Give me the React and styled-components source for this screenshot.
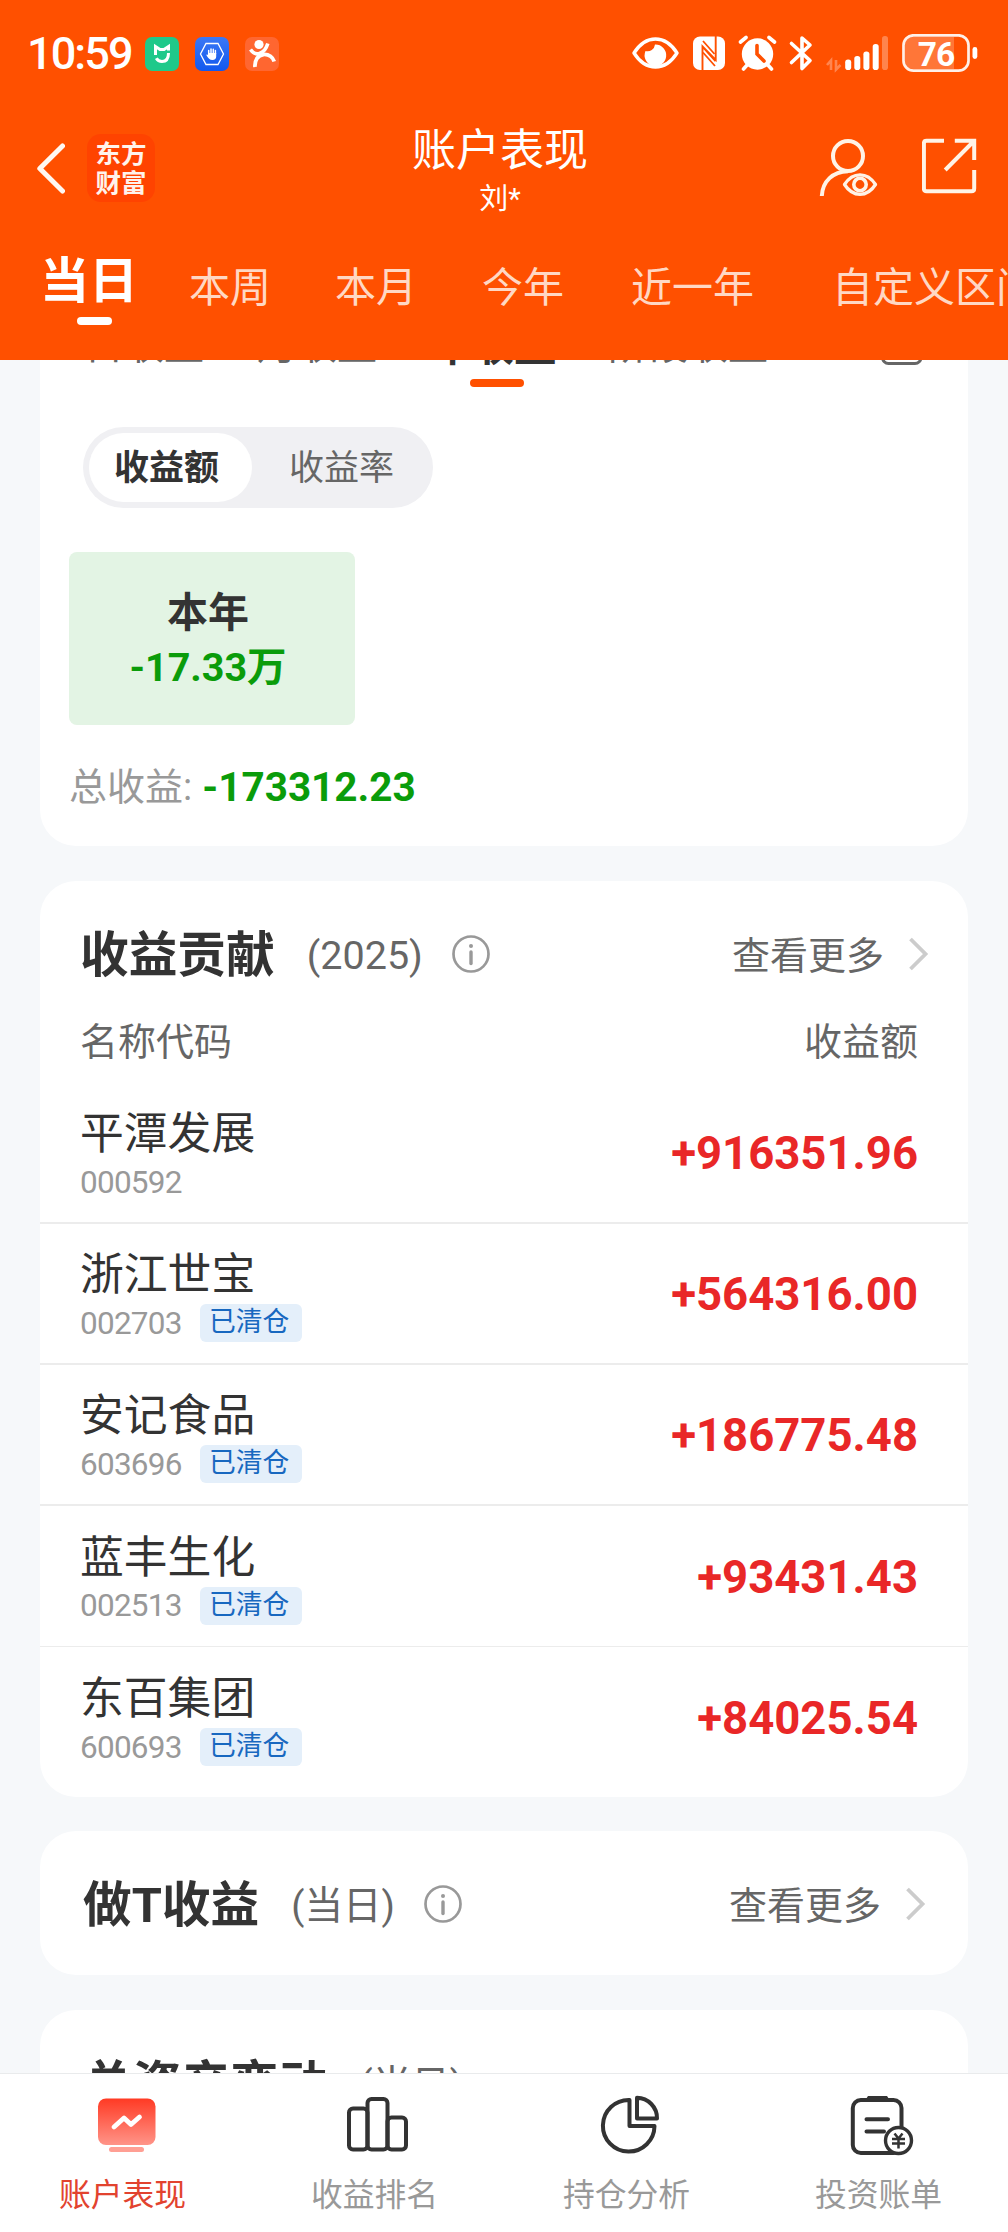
import React from 'react';
import styled, { createGlobalStyle } from 'styled-components';

const GlobalStyle = createGlobalStyle`
  * { box-sizing: border-box; }
  html, body { margin: 0; padding: 0; }
  body {
    background: #f6f8fa;
    font-family: Roboto, "Noto Sans CJK SC", sans-serif;
    color: #333;
  }
  svg { display: block; flex: none; }
`;

const Screen = styled.div`
  width: 1008px;
  height: 2232px;
  display: flex;
  flex-direction: column;
  overflow: hidden;
  background: #f6f8fa;
`;

const Header = styled.header`
  flex: none;
  height: 360px;
  background: #ff5000;
  color: #fff;
  display: flex;
  flex-direction: column;
`;

const StatusBar = styled.div`
  height: 108px;
  padding: 0 30px 0 27px;
  display: flex;
  align-items: center;
  justify-content: space-between;
`;

const StatusLeft = styled.div`
  display: flex;
  align-items: center;
`;

const Clock = styled.span`
  width: 117px;
  font-size: 45px;
  font-weight: 500;
  letter-spacing: -1.9px;
  line-height: 50px;
  white-space: nowrap;
`;

const TitleBar = styled.div`
  height: 120px;
  display: grid;
  grid-template-columns: 400px 200px 1fr;
  align-items: center;
`;

const TitleLeft = styled.div`
  display: flex;
  align-items: center;
  gap: 22px;
  padding-left: 36px;
`;

const Logo = styled.div`
  width: 68px;
  height: 68px;
  border-radius: 14px;
  background: #ff4300;
  color: #fff3ec;
  display: flex;
  align-items: center;
  justify-content: center;
  text-align: center;
  font-size: 25.5px;
  font-weight: 700;
  line-height: 29px;
  padding-top: 2px;
`;

const TitleCenter = styled.div`
  display: flex;
  flex-direction: column;
  align-items: center;
  padding-top: 6px;
`;

const Title = styled.div`
  font-size: 44px;
  line-height: 56px;
  white-space: nowrap;
`;

const Account = styled.div`
  font-size: 29px;
  line-height: 40px;
`;

const TitleRight = styled.div`
  display: flex;
  justify-content: flex-end;
  gap: 43px;
  padding-right: 30px;
`;

const RangeTabs = styled.nav`
  height: 132px;
  padding-left: 40px;
  display: grid;
  grid-template-columns: 149px 146px 147px 149px 201px 230px;
  overflow: hidden;
`;

const RangeTab = styled.div`
  display: flex;
  flex-direction: column;
  padding-top: ${(p) => (p.$active ? '27px' : '33px')};
  font-size: ${(p) => (p.$active ? '49px' : '41px')};
  font-weight: ${(p) => (p.$active ? 700 : 400)};
  color: ${(p) => (p.$active ? '#fff' : '#ffd8c4')};
  line-height: 54px;
  white-space: nowrap;
`;

const RangeMark = styled.span`
  width: 35px;
  height: 8px;
  margin: 8px 0 0 37px;
  border-radius: 4px;
  background: #fff;
`;

const Content = styled.main`
  flex: none;
  height: 1713px;
  overflow: hidden;
  padding: 0 40px;
  display: flex;
  flex-direction: column;
`;

const Card = styled.section`
  flex: none;
  background: #fff;
  border-radius: 36px;
  margin-bottom: ${(p) => p.$gap || 35}px;
  height: ${(p) => p.$height}px;
`;

const CalendarCard = styled(Card)`
  margin-top: -54px;
  padding: 0 29px;
  display: flex;
  flex-direction: column;
  align-items: flex-start;
`;

const PeriodTabs = styled.div`
  height: 81px;
  width: 100%;
  padding-left: 15px;
  display: grid;
  grid-template-columns: 173px 172px 179px 273px auto;
`;

const PeriodTab = styled.div`
  display: flex;
  flex-direction: column;
  padding-top: ${(p) => (p.$active ? '13px' : '12px')};
  font-size: ${(p) => (p.$active ? '42.5px' : '40px')};
  font-weight: ${(p) => (p.$active ? 700 : 400)};
  color: ${(p) => (p.$active ? '#333' : '#666')};
  line-height: 56px;
  white-space: nowrap;
`;

const PeriodMark = styled.span`
  width: 54px;
  height: 8px;
  margin: 4px 0 0 41px;
  border-radius: 4px;
  background: #ff5000;
`;

const Segment = styled.div`
  margin: 40px 0 0 14px;
  width: 350px;
  height: 81px;
  padding: 6px;
  border-radius: 41px;
  background: #f0f0f3;
  display: flex;
`;

const SegmentItem = styled.div`
  width: ${(p) => (p.$active ? '163px' : '175px')};
  height: 69px;
  padding: ${(p) => (p.$active ? '0 8px 0 0' : '0 0 0 4px')};
  border-radius: 35px;
  background: ${(p) => (p.$active ? '#fff' : 'transparent')};
  color: ${(p) => (p.$active ? '#333' : '#666')};
  font-weight: ${(p) => (p.$active ? 700 : 400)};
  font-size: 35px;
  line-height: 72px;
  text-align: center;
`;

const YearTile = styled.div`
  margin-top: 44px;
  width: 286px;
  height: 173px;
  padding: 34px 8px 0 0;
  border-radius: 8px;
  background: #e3f4e4;
  text-align: center;
  font-weight: 700;
`;

const YearName = styled.div`
  font-size: 41px;
  line-height: 55px;
`;

const YearValue = styled.div`
  font-size: 39.5px;
  line-height: 54px;
  color: #0a9c0a;
`;

const Total = styled.div`
  margin-top: 34px;
  display: flex;
  align-items: center;
  gap: 10px;
  font-size: 38px;
  line-height: 56px;
  color: #999;
`;

const TotalValue = styled.b`
  font-size: 40.5px;
  color: #0a9c0a;
`;

const CardHead = styled.div`
  padding: 49px ${(p) => p.$right || 40}px 0 ${(p) => p.$left}px;
  display: flex;
  align-items: center;
`;

const CardTitle = styled.h2`
  margin: 0;
  padding-top: 3px;
  height: 48px;
  font-size: 48.7px;
  font-weight: 700;
  line-height: 46px;
  white-space: nowrap;
`;

const CardScope = styled.span`
  margin: 0 28px 0 32px;
  padding-top: 3px;
  font-size: ${(p) => (p.$numeric ? 39.5 : 38.5)}px;
  line-height: 44px;
  color: #666;
  white-space: nowrap;
`;

const More = styled.div`
  margin-left: auto;
  display: flex;
  align-items: center;
  gap: 25px;
  color: #666;
  font-size: 38px;
  line-height: 44px;
`;

const MoreText = styled.span`
  padding-top: 3px;
`;

const ColumnNames = styled.div`
  margin: 43px 0 20px;
  padding: 0 50px 0 40px;
  display: flex;
  justify-content: space-between;
  font-size: 38px;
  line-height: 42px;
  color: #666;
`;

const StockRow = styled.div`
  height: 141px;
  padding: 0 50px 0 40px;
  display: flex;
  align-items: center;
  justify-content: space-between;
  border-bottom: ${(p) => p.$line}px solid #ececec;
`;

const StockInfo = styled.div`
  padding-top: 9px;
`;

const StockName = styled.div`
  font-size: 43.8px;
  line-height: 50px;
`;

const StockMeta = styled.div`
  height: 46px;
  display: flex;
  align-items: center;
  gap: 18px;
`;

const StockCode = styled.span`
  font-size: 31.5px;
  letter-spacing: -0.75px;
  line-height: 46px;
  padding-top: 1px;
  color: #999;
`;

const ClosedTag = styled.span`
  width: 102px;
  height: 38px;
  padding-right: 3px;
  border-radius: 6px;
  background: #e4effa;
  color: #1868c0;
  font-size: 26.8px;
  line-height: 36px;
  text-align: center;
`;

const Gain = styled.span`
  padding-top: 3px;
  font-size: 45.5px;
  font-weight: 700;
  line-height: 60px;
  color: #e92727;
`;

const BottomNav = styled.nav`
  flex: none;
  height: 159px;
  border-top: 1px solid #e9ebec;
  background: #fff;
  display: grid;
  grid-template-columns: repeat(4, 1fr);
`;

const NavItem = styled.div`
  display: flex;
  flex-direction: column;
  align-items: center;
  padding-top: 17px;
  color: ${(p) => (p.$active ? '#e2432f' : '#999')};
`;

const NavLabel = styled.span`
  margin: 16px 7px 0 0;
  font-size: 31.8px;
  line-height: 44px;
`;

const AppBadges = () => (
  <svg width="136" height="36" viewBox="144 36 136 36">
    <defs>
      <linearGradient id="blueBadge" x1="0" y1="0" x2="0" y2="1">
        <stop offset="0" stopColor="#3b78f5" />
        <stop offset="1" stopColor="#1158ee" />
      </linearGradient>
    </defs>
    <rect x="145" y="37" width="34" height="34" rx="7" fill="#1fc98a" />
    <path d="M155.5 55V46.5L160 49.5H164L168.500 46.500V50.500" fill="none" stroke="#fff" strokeWidth="3" />
    <path d="M168.500 53c0 5.500-2.500 8.500-6.500 8.500c-2.500 0-4.500-1-5.700-3.200" fill="none" stroke="#fff" strokeWidth="3" />
    <rect x="195" y="37" width="34" height="34" rx="7" fill="url(#blueBadge)" />
    <path d="M206 43.500H218L223.500 54L218 64.500H206L200.500 54Z" fill="none" stroke="#fff" strokeWidth="1.300" />
    <path d="M208.700 53.500V50.500M211 53.500V49M213.300 53.500V49.200M215.400 54V50.500" stroke="#fff" strokeWidth="1.500" strokeLinecap="round" />
    <path d="M208 53h8.200v3.500c0 2-1.300 3.500-3.700 3.500c-2.800 0-4.200-1.600-6.200-5c.8-.8 1.500-.3 1.700.2z" fill="#fff" />
    <rect x="245" y="37" width="34" height="34" rx="7" fill="#ff6630" />
    <circle cx="259" cy="44.500" r="4.600" fill="#fff" />
    <path d="M250.500 49.500C253 53 256.500 54.500 259.500 53.500C264 52 266.500 48 267.800 43.500" fill="none" stroke="#fff" strokeWidth="3.600" />
    <path d="M255 67C254.500 60 258 55 263.500 54.500C269 54 273 57.500 274.200 61.500" fill="none" stroke="#fff" strokeWidth="3.800" />
  </svg>
);

const StatusIcons = () => (
  <svg width="346" height="40" viewBox="632 34 346 40" fill="none">
    <path d="M634 53C640 43.500 647 39 655.500 39S671 43.500 677 53C671 62.500 664 67 655.500 67S640 62.500 634 53Z" stroke="#fff" strokeWidth="3.400" strokeLinejoin="round" />
    <path d="M655 44.500A10.800 10.800 0 1 1 645.500 51A7.500 7.500 0 0 0 655 44.500Z" fill="#fff" />
    <rect x="693" y="36.500" width="32" height="33.500" rx="7" fill="#fff" />
    <path d="M702.500 70V46.500L715.500 61M715.700 36V60L702.500 46.500" stroke="#ff5000" strokeWidth="1.900" />
    <path d="M703 52.500L715 66M703 41L714.500 54" stroke="#ff5000" strokeWidth="1.800" />
    <circle cx="757.500" cy="54" r="15.700" fill="#fff" />
    <path d="M740.500 42L746 37.500M769 37.500L774.500 42M748 64L743.500 69M767 64L771.500 69" stroke="#fff" strokeWidth="3.600" strokeLinecap="round" />
    <path d="M757 45.500V54L764 61" stroke="#ff5000" strokeWidth="3.600" strokeLinecap="round" />
    <path d="M791.500 43.500L810 60.500L802 68.500V38L810 45L791.500 62.500" stroke="#fff" strokeWidth="3.600" strokeLinejoin="round" strokeLinecap="round" />
    <path d="M827 65L831 60.500V70M836 60V69.500L840.500 65" stroke="#ff8550" strokeWidth="2.600" />
    <g fill="#fff">
      <rect x="845.200" y="59.500" width="6" height="10.500" rx="2.800" />
      <rect x="854.300" y="56" width="6" height="14" rx="2.800" />
      <rect x="863.400" y="51.500" width="6" height="18.500" rx="2.800" />
      <rect x="872.700" y="44" width="6" height="26" rx="2.800" />
      <rect x="882" y="36" width="6" height="34" rx="2.800" fillOpacity=".3" />
    </g>
    <path d="M913 37H954V69H913Q905 69 905 61V45Q905 37 913 37Z" fill="#ff7638" />
    <rect x="903.500" y="35.300" width="65" height="35.400" rx="10" stroke="#fff0e8" strokeWidth="2.700" />
    <rect x="972.500" y="47" width="4.800" height="12" rx="2.400" fill="#fff" />
    <text x="936" y="65.500" textAnchor="middle" fill="#fff" fontFamily="Roboto, sans-serif" fontSize="33.500" fontWeight="700" letterSpacing="-1">76</text>
  </svg>
);

const BackIcon = () => (
  <svg width="29" height="54" viewBox="36 141 29 54" fill="none">
    <path d="M62.500 146L39.800 168.500L62.500 191" stroke="#fff8f2" strokeWidth="5" strokeLinecap="round" strokeLinejoin="round" />
  </svg>
);

const PersonIcon = () => (
  <svg width="60" height="62" viewBox="819 137 60 62" fill="none" stroke="#fff3e6" strokeWidth="4">
    <circle cx="848" cy="156" r="15" />
    <path d="M821.800 196C822.500 181 833 171.500 848 171.200" />
    <path d="M844.500 184.500C849 177.500 854 174.800 860 174.800S871 177.500 875.500 184.500C871 191.500 866 194.300 860 194.300S849 191.500 844.500 184.500Z" strokeWidth="3.300" strokeLinejoin="round" />
    <circle cx="860" cy="184.500" r="6.200" strokeWidth="3.600" />
  </svg>
);

const ExportIcon = () => (
  <svg width="56" height="58" viewBox="922 139 56 58" fill="none" stroke="#fff3e6" strokeWidth="4">
    <path d="M944 142.800H926.500Q923.900 142.800 923.900 145.400V190.500Q923.900 193.200 926.500 193.200H971.500Q974.200 193.200 974.200 190.500V172" />
    <path d="M954.800 142.800H974.200V162M974 143L945.200 172" />
  </svg>
);

const CalendarIcon = () => (
  <svg width="42" height="46" viewBox="0 0 42 46" fill="none" stroke="#666" strokeWidth="3">
    <rect x="1.500" y="4.500" width="38.500" height="40" rx="6" />
    <path d="M2 16H40M12 0V9M30 0V9" />
  </svg>
);

const CalendarSlot = styled.div`
  padding-top: 13px;
`;

const InfoIcon = () => (
  <svg width="40" height="40" viewBox="0 0 40 40" fill="none" stroke="#999">
    <circle cx="20" cy="20" r="17.500" strokeWidth="2.700" />
    <path d="M20 18V29.500" strokeWidth="3.400" strokeLinecap="round" />
    <circle cx="20" cy="12" r="2" fill="#999" stroke="none" />
  </svg>
);

const ChevronIcon = () => (
  <svg width="22" height="36" viewBox="0 0 22 36" fill="none">
    <path d="M1.500 3L16.500 18L1.500 33" stroke="#ccc" strokeWidth="3.800" />
  </svg>
);

const PerformanceIcon = () => (
  <svg width="64" height="66" viewBox="94 2091 64 66" fill="none">
    <defs>
      <linearGradient id="screenFill" x1="0" y1="0" x2="0" y2="1">
        <stop offset="0" stopColor="#ff3a24" />
        <stop offset="1" stopColor="#ff9488" />
      </linearGradient>
    </defs>
    <rect x="98" y="2098.500" width="57.500" height="46.500" rx="8" fill="url(#screenFill)" />
    <path d="M114 2127L124 2118L131 2124.500L139.500 2117" stroke="#fff" strokeWidth="4.800" strokeLinecap="round" strokeLinejoin="round" />
    <rect x="109" y="2147" width="35" height="5" rx="2.500" fill="#ff9f94" />
  </svg>
);

const RankingIcon = () => (
  <svg width="66" height="66" viewBox="346 2091 66 66" fill="none" stroke="#333" strokeWidth="4">
    <rect x="350" y="2108.500" width="18.500" height="41" rx="4" />
    <rect x="368.500" y="2099" width="20" height="50.500" rx="4" />
    <rect x="388.500" y="2117.500" width="18.500" height="32" rx="4" />
  </svg>
);

const PieIcon = () => (
  <svg width="62" height="66" viewBox="599 2091 62 66" fill="none" stroke="#333" strokeWidth="4" strokeLinejoin="round">
    <path d="M629.500 2100A25.800 25.800 0 1 0 654.500 2126H629.500Z" />
    <path d="M637 2097.800V2118.500H657A20.300 20.300 0 0 0 637 2097.800Z" />
  </svg>
);

const BillIcon = () => (
  <svg width="66" height="66" viewBox="850 2091 66 66" fill="none" stroke="#333" strokeWidth="4">
    <path d="M867 2099L869 2096H888L890 2099V2101H867Z" fill="#333" stroke="none" />
    <rect x="853.800" y="2100" width="48.700" height="53" rx="8" />
    <path d="M867.500 2119.300H889M867.500 2131.500H885" strokeLinecap="round" />
    <circle cx="899.500" cy="2140.500" r="13" fill="#fff" strokeWidth="3.400" />
    <path d="M895.500 2133.500L899.500 2138.500L903.500 2133.500M899.500 2138.500V2148.500M893 2139H906M893 2143.500H906" strokeWidth="2.500" />
  </svg>
);

const ranges = ['当日', '本周', '本月', '今年', '近一年', '自定义区间'];
const periods = ['日收益', '月收益', '年收益', '阶段收益'];
const stocks = [
  { name: '平潭发展', code: '000592', gain: '+916351.96', closed: false, line: 2 },
  { name: '浙江世宝', code: '002703', gain: '+564316.00', closed: true, line: 2 },
  { name: '安记食品', code: '603696', gain: '+186775.48', closed: true, line: 2 },
  { name: '蓝丰生化', code: '002513', gain: '+93431.43', closed: true, line: 1 },
  { name: '东百集团', code: '600693', gain: '+84025.54', closed: true, line: 0 },
];
const navItems = [
  { label: '账户表现', Icon: PerformanceIcon },
  { label: '收益排名', Icon: RankingIcon },
  { label: '持仓分析', Icon: PieIcon },
  { label: '投资账单', Icon: BillIcon },
];

const SectionHead = ({ title, scope, left, right, numeric, more }) => (
  <CardHead $left={left} $right={right}>
    <CardTitle>{title}</CardTitle>
    <CardScope $numeric={numeric}>({scope})</CardScope>
    {more && (
      <>
        <InfoIcon />
        <More>
          <MoreText>查看更多</MoreText>
          <ChevronIcon />
        </More>
      </>
    )}
  </CardHead>
);

export default function App() {
  return (
    <>
      <GlobalStyle />
      <Screen>
        <Header>
          <StatusBar>
            <StatusLeft>
              <Clock>10:59</Clock>
              <AppBadges />
            </StatusLeft>
            <StatusIcons />
          </StatusBar>
          <TitleBar>
            <TitleLeft>
              <BackIcon />
              <Logo>东方<br />财富</Logo>
            </TitleLeft>
            <TitleCenter>
              <Title>账户表现</Title>
              <Account>刘*</Account>
            </TitleCenter>
            <TitleRight>
              <PersonIcon />
              <ExportIcon />
            </TitleRight>
          </TitleBar>
          <RangeTabs>
            {ranges.map((label, i) => (
              <RangeTab key={label} $active={i === 0}>
                {label}
                {i === 0 && <RangeMark />}
              </RangeTab>
            ))}
          </RangeTabs>
        </Header>

        <Content>
          <CalendarCard $height={540}>
            <PeriodTabs>
              {periods.map((label, i) => (
                <PeriodTab key={label} $active={i === 2}>
                  {label}
                  {i === 2 && <PeriodMark />}
                </PeriodTab>
              ))}
              <CalendarSlot>
                <CalendarIcon />
              </CalendarSlot>
            </PeriodTabs>
            <Segment>
              <SegmentItem $active>收益额</SegmentItem>
              <SegmentItem>收益率</SegmentItem>
            </Segment>
            <YearTile>
              <YearName>本年</YearName>
              <YearValue>-17.33万</YearValue>
            </YearTile>
            <Total>
              <span>总收益:</span>
              <TotalValue>-173312.23</TotalValue>
            </Total>
          </CalendarCard>

          <Card $height={916} $gap={34}>
            <SectionHead title="收益贡献" scope="2025" left={40} right={37} numeric more />
            <ColumnNames>
              <span>名称代码</span>
              <span>收益额</span>
            </ColumnNames>
            {stocks.map((s) => (
              <StockRow key={s.code} $line={s.line}>
                <StockInfo>
                  <StockName>{s.name}</StockName>
                  <StockMeta>
                    <StockCode>{s.code}</StockCode>
                    {s.closed && <ClosedTag>已清仓</ClosedTag>}
                  </StockMeta>
                </StockInfo>
                <Gain>{s.gain}</Gain>
              </StockRow>
            ))}
          </Card>

          <Card $height={144}>
            <SectionHead title="做T收益" scope="当日" left={43} more />
          </Card>

          <Card $height={144}>
            <SectionHead title="总资产变动" scope="当日" left={44} />
          </Card>
        </Content>

        <BottomNav>
          {navItems.map(({ label, Icon }, i) => (
            <NavItem key={label} $active={i === 0}>
              <Icon />
              <NavLabel>{label}</NavLabel>
            </NavItem>
          ))}
        </BottomNav>
      </Screen>
    </>
  );
}
